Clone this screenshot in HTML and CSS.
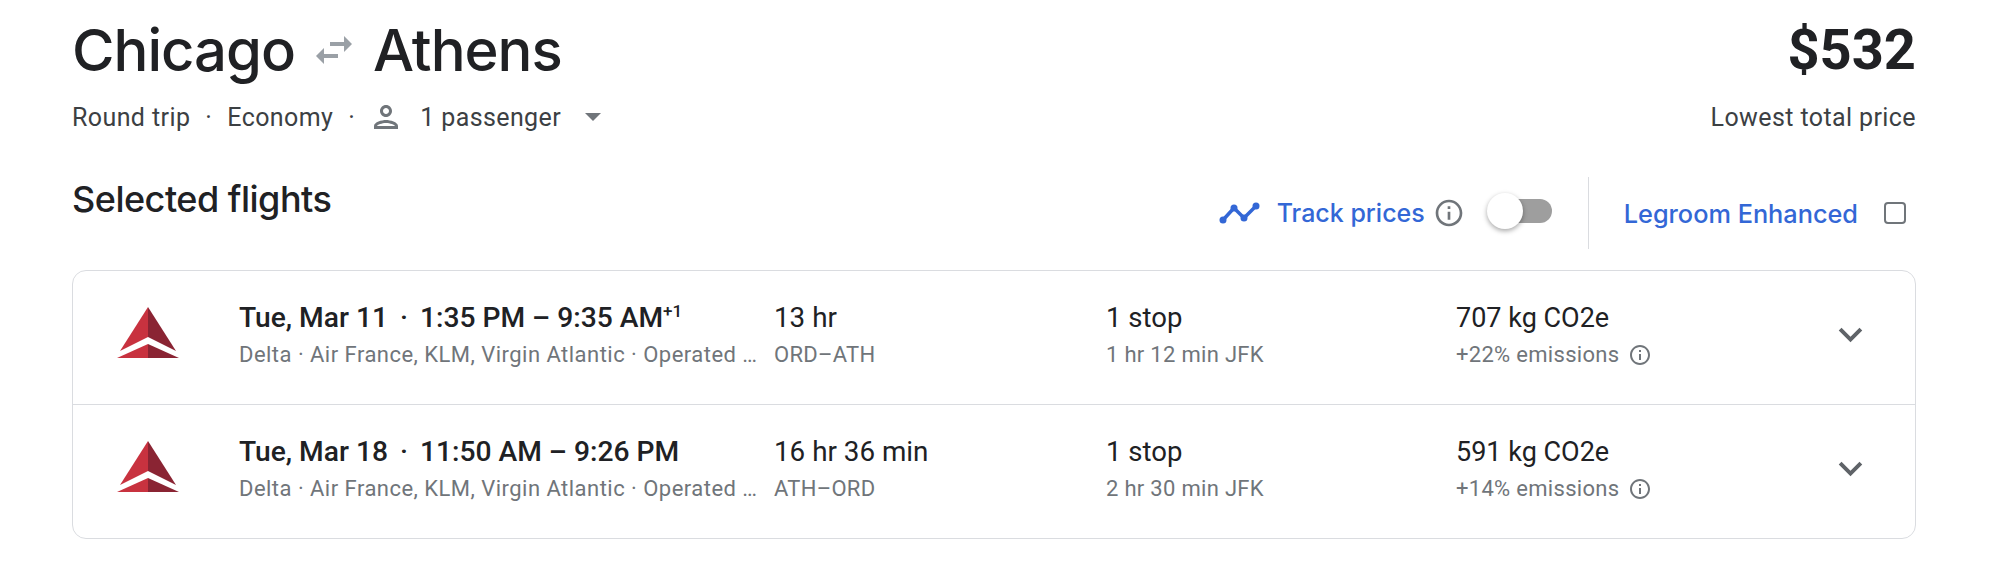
FILE: index.html
```html
<!DOCTYPE html>
<html lang="en">
  <head>
    <meta charset="UTF-8" />
    <title>Chicago to Athens</title>
    <link rel="stylesheet" href="styles.css">
  </head>
  <body>
    <div class="container">
      <div class="summary">
        <div>
          <h1 class="route">
            <span>Chicago</span>
            <svg class="swap-icon" width="48" height="48" viewBox="0 0 24 24"><path fill="#9aa0a6" d="M6.99 11 3 15l3.99 4v-3H14v-2H6.99v-3zM21 9l-3.99-4v3H10v2h7.01v3L21 9z"/></svg>
            <span>Athens</span>
          </h1>
          <div class="trip-info">
            <span>Round trip</span>
            <span class="dot">·</span>
            <span>Economy</span>
            <span class="dot">·</span>
            <svg class="person-icon" width="36" height="36" viewBox="0 0 24 24"><path fill="#70757a" d="M12 6c1.1 0 2 .9 2 2s-.9 2-2 2-2-.9-2-2 .9-2 2-2m0 10c2.7 0 5.8 1.29 6 2H6c.23-.72 3.31-2 6-2m0-12C9.79 4 8 5.79 8 8s1.79 4 4 4 4-1.79 4-4-1.79-4-4-4zm0 10c-2.67 0-8 1.34-8 4v2h16v-2c0-2.66-5.33-4-8-4z"/></svg>
            <span class="passengers">1 passenger</span>
            <span class="caret"></span>
          </div>
        </div>
        <div class="price-box">
          <div class="price">$532</div>
          <div class="price-label">Lowest total price</div>
        </div>
      </div>

      <div class="toolbar">
        <h2>Selected flights</h2>
        <div class="actions">
          <svg class="trend-icon" width="42" height="24" viewBox="0 0 42 24"><path fill="none" stroke="#3367d6" stroke-width="3.5" stroke-linecap="round" stroke-linejoin="round" d="M4 19 15 7l10 10L37 5"/><circle cx="4" cy="19" r="3.5" fill="#3367d6"/><circle cx="15" cy="7" r="3.5" fill="#3367d6"/><circle cx="25" cy="17" r="3.5" fill="#3367d6"/><circle cx="37" cy="5" r="3.5" fill="#3367d6"/></svg>
          <span class="link track-link">Track prices</span>
          <svg class="info-big" width="32" height="32" viewBox="0 0 24 24"><path fill="#70757a" d="M11 7h2v2h-2zm0 4h2v6h-2zm1-9C6.48 2 2 6.48 2 12s4.48 10 10 10 10-4.48 10-10S17.52 2 12 2zm0 18c-4.41 0-8-3.59-8-8s3.59-8 8-8 8 3.59 8 8-3.59 8-8 8z"/></svg>
          <div class="toggle"><span class="knob"></span></div>
          <div class="separator"></div>
          <span class="link legroom-link">Legroom Enhanced</span>
          <span class="checkbox"></span>
        </div>
      </div>

      <div class="flights">
        <div class="flight">
          <svg class="logo" width="62" height="51" viewBox="0 0 62 51"><use href="#delta"/></svg>
          <div class="col-times">
            <div class="main">Tue, Mar 11 <span class="dot">·</span> 1:35 PM – 9:35 AM<sup>+1</sup></div>
            <div class="sub">Delta · Air France, KLM, Virgin Atlantic · Operated …</div>
          </div>
          <div class="col-duration">
            <div class="main">13 hr</div>
            <div class="sub">ORD–ATH</div>
          </div>
          <div class="col-stops">
            <div class="main">1 stop</div>
            <div class="sub">1 hr 12 min JFK</div>
          </div>
          <div class="col-emissions">
            <div class="main">707 kg CO2e</div>
            <div class="sub">+22% emissions
              <svg class="info-small" width="24" height="24" viewBox="0 0 24 24"><path fill="#70757a" d="M11 7h2v2h-2zm0 4h2v6h-2zm1-9C6.48 2 2 6.48 2 12s4.48 10 10 10 10-4.48 10-10S17.52 2 12 2zm0 18c-4.41 0-8-3.59-8-8s3.59-8 8-8 8 3.59 8 8-3.59 8-8 8z"/></svg>
            </div>
          </div>
          <svg class="chevron" width="47" height="47" viewBox="0 0 24 24"><path fill="#5f6368" d="M16.59 8.59 12 13.17 7.41 8.59 6 10l6 6 6-6z"/></svg>
        </div>
        <div class="flight">
          <svg class="logo" width="62" height="51" viewBox="0 0 62 51"><defs><g id="delta"><path fill="#c8323f" d="M31 0 3 44l28-14z"/><path fill="#8a2433" d="M31 0l28 44-28-14z"/><path fill="#c8323f" d="M0 51l31-14v14z"/><path fill="#8a2433" d="M62 51 31 37v14z"/></g></defs><use href="#delta"/></svg>
          <div class="col-times">
            <div class="main">Tue, Mar 18 <span class="dot">·</span> 11:50 AM – 9:26 PM</div>
            <div class="sub">Delta · Air France, KLM, Virgin Atlantic · Operated …</div>
          </div>
          <div class="col-duration">
            <div class="main">16 hr 36 min</div>
            <div class="sub">ATH–ORD</div>
          </div>
          <div class="col-stops">
            <div class="main">1 stop</div>
            <div class="sub">2 hr 30 min JFK</div>
          </div>
          <div class="col-emissions">
            <div class="main">591 kg CO2e</div>
            <div class="sub">+14% emissions
              <svg class="info-small" width="24" height="24" viewBox="0 0 24 24"><path fill="#70757a" d="M11 7h2v2h-2zm0 4h2v6h-2zm1-9C6.48 2 2 6.48 2 12s4.48 10 10 10 10-4.48 10-10S17.52 2 12 2zm0 18c-4.41 0-8-3.59-8-8s3.59-8 8-8 8 3.59 8 8-3.59 8-8 8z"/></svg>
            </div>
          </div>
          <svg class="chevron" width="47" height="47" viewBox="0 0 24 24"><path fill="#5f6368" d="M16.59 8.59 12 13.17 7.41 8.59 6 10l6 6 6-6z"/></svg>
        </div>
      </div>
    </div>
  </body>
</html>
```

FILE: styles.css
```css
* {
  box-sizing: border-box;
}

body {
  font-family: Roboto, sans-serif;
  background-color: #fff;
  color: #202124;
  margin: 0;
}

.container {
  padding: 12px 78px 0 72px;
}

.summary {
  display: flex;
  justify-content: space-between;
}

.route {
  display: flex;
  align-items: center;
  gap: 15px;
  margin: 0;
  height: 76px;
  font-family: Inter, sans-serif;
  font-size: 58px;
  font-weight: 500;
  letter-spacing: -1px;
}

.trip-info {
  display: flex;
  align-items: center;
  height: 36px;
  margin-top: 11px;
  font-size: 25px;
  letter-spacing: 0.4px;
  color: #3c4043;
}

.trip-info .dot {
  margin: 0 15px;
}

.person-icon {
  margin: 0 16px 0 -2px;
}

.caret {
  margin-left: 24px;
  border-left: 8px solid transparent;
  border-right: 8px solid transparent;
  border-top: 8px solid #70757a;
}

.price-box {
  text-align: right;
}

.price {
  height: 76px;
  line-height: 76px;
  font-size: 56px;
  font-weight: 700;
}

.price-label {
  height: 36px;
  line-height: 38px;
  margin-top: 11px;
  font-size: 25px;
  letter-spacing: 0.4px;
  color: #3c4043;
}

.toolbar {
  display: flex;
  justify-content: space-between;
  align-items: flex-start;
  margin-top: 39px;
  height: 96px;
}

h2 {
  margin: 0;
  padding-top: 3px;
  font-family: Inter, sans-serif;
  font-size: 36px;
  font-weight: 500;
  letter-spacing: -0.5px;
}

.actions {
  display: flex;
  align-items: center;
  height: 72px;
  margin-top: 3px;
}

.link {
  font-family: Inter, sans-serif;
  font-size: 25px;
  font-weight: 500;
  color: #3367d6;
}

.track-link {
  margin-left: 16px;
}

.legroom-link {
  font-size: 25.3px;
}

.info-big {
  margin-left: 8px;
}

.toggle {
  position: relative;
  width: 55px;
  height: 24px;
  margin: -5px 0 0 32px;
  background-color: #9e9e9e;
  border-radius: 12px;
}

.knob {
  position: absolute;
  left: -10px;
  top: -6px;
  width: 36px;
  height: 36px;
  border-radius: 50%;
  background-color: #fff;
  box-shadow: 0 2px 5px rgba(0, 0, 0, 0.35);
}

.separator {
  width: 1px;
  height: 72px;
  margin: 0 35px 0 36px;
  background-color: #dadce0;
}

.checkbox {
  width: 22px;
  height: 22px;
  margin: 0 10px 0 26px;
  border: 2px solid #70757a;
  border-radius: 4px;
}

.flights {
  border: 1px solid #dadce0;
  border-radius: 14px;
}

.flight {
  display: flex;
  align-items: center;
  height: 133px;
  padding: 0 0 6px 44px;
}

.flight + .flight {
  height: 134px;
  border-top: 1px solid #dadce0;
}

.logo {
  flex: none;
  margin-bottom: 5px;
}

.main {
  font-size: 27.5px;
  line-height: 36px;
  white-space: nowrap;
}

.sub {
  display: flex;
  align-items: center;
  gap: 9px;
  margin-top: 4px;
  font-size: 22px;
  line-height: 30px;
  letter-spacing: 0.3px;
  color: #70757a;
  white-space: nowrap;
}

.col-times {
  width: 535px;
  margin-left: 60px;
}

.col-times .main {
  font-size: 28.2px;
  font-weight: 500;
}

.col-times .sub {
  letter-spacing: 0.47px;
}

.col-times .dot {
  margin: 0 5px;
}

sup {
  font-size: 17px;
  line-height: 0;
}

.col-duration {
  width: 332px;
}

.col-duration .main {
  font-size: 27.8px;
}

.col-stops {
  width: 350px;
}

.col-emissions {
  width: 371px;
}

.col-emissions .main {
  font-size: 27px;
}

.chevron {
  flex: none;
}
```
